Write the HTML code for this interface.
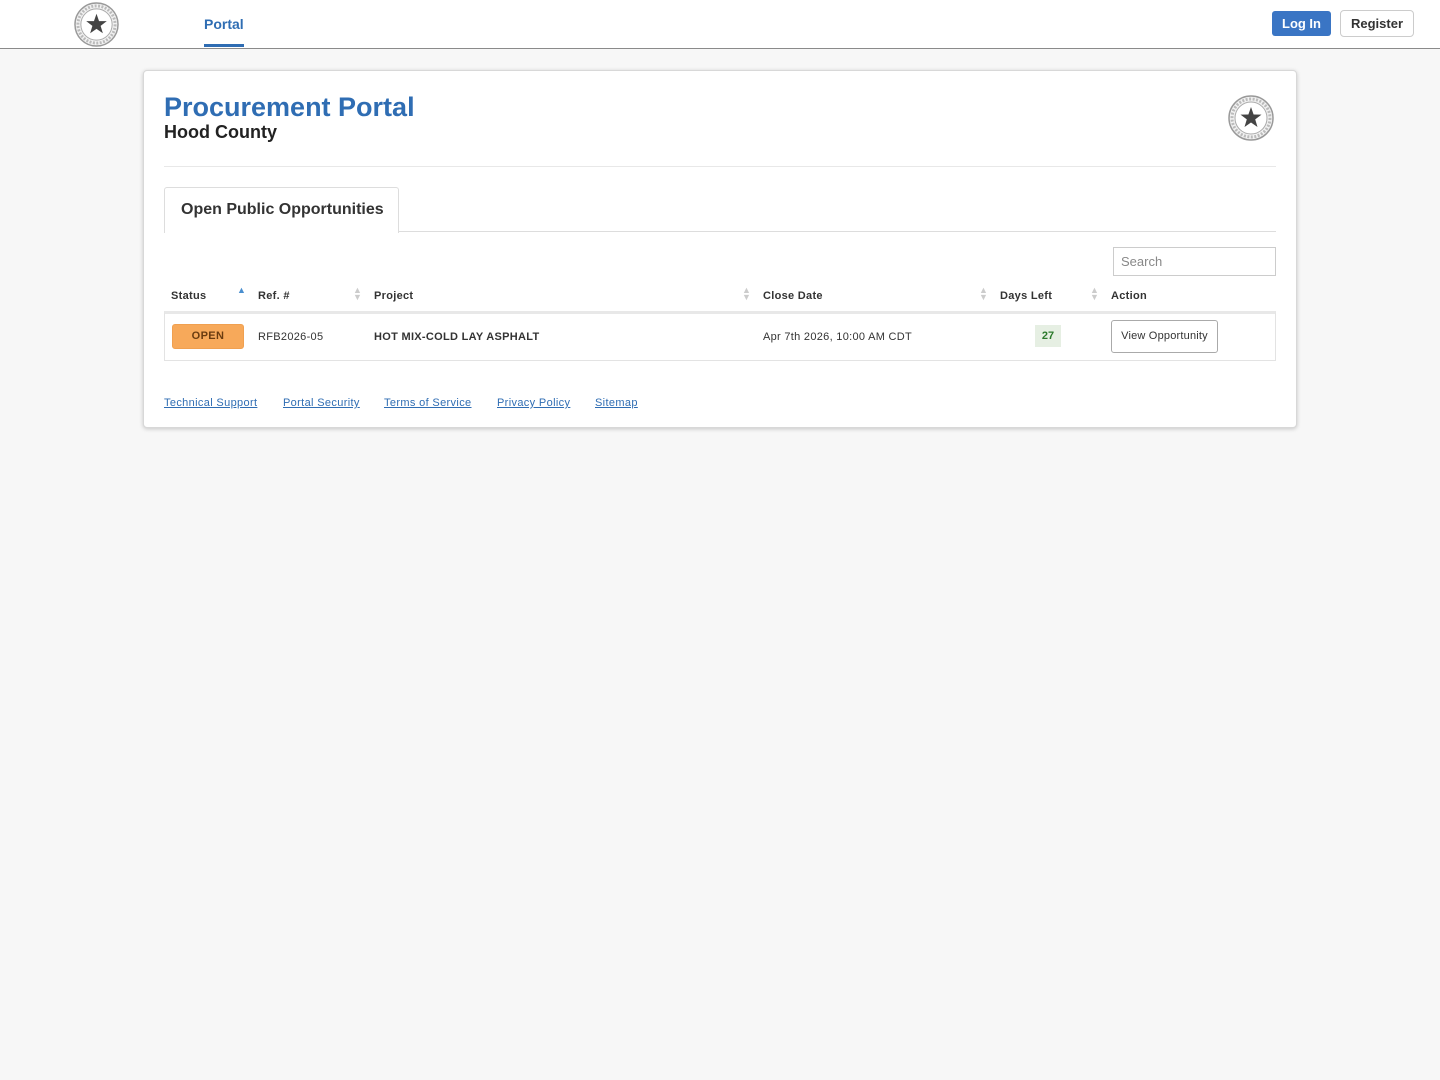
<!DOCTYPE html>
<html><head><meta charset="utf-8"><style>
*{box-sizing:border-box;margin:0;padding:0}
body{width:1440px;height:1080px;background:#f7f7f7;font-family:"Liberation Sans",Arial,sans-serif;position:relative;overflow:hidden}
.hdr{position:absolute;left:0;top:0;width:1440px;height:49px;background:#fff;border-bottom:1px solid #8a8a8a}
.seal{position:absolute}
.portal{position:absolute;left:204px;top:16px;font-size:14px;font-weight:bold;color:#2f6db3}
.portal:after{content:"";position:absolute;left:0;top:28px;width:40px;height:3px;background:#2f6db3}
.login{position:absolute;left:1272px;top:11px;width:59px;height:25px;background:#3a75c4;color:#fff;border-radius:3px;font-size:13px;font-weight:bold;text-align:center;line-height:25px}
.reg{position:absolute;left:1340px;top:10px;width:74px;height:27px;background:#fff;border:1px solid #ccc;border-radius:4px;color:#333;font-size:13px;font-weight:bold;text-align:center;line-height:25px}
.card{position:absolute;left:143px;top:70px;width:1154px;height:358px;background:#fff;border:1px solid #d8d8d8;border-radius:4px;box-shadow:0 1px 4px rgba(0,0,0,.2)}
h1{position:absolute;left:20px;top:21px;font-size:27px;color:#2f6db3;font-weight:bold}
h2{position:absolute;left:20px;top:51px;font-size:18px;color:#222;font-weight:bold}
.hr{position:absolute;left:20px;top:95px;width:1112px;height:1px;background:#e8e8e8}
.tab{position:absolute;left:20px;top:116px;width:235px;height:46px;border:1px solid #ddd;border-bottom:none;border-radius:3px 3px 0 0;background:#fff;font-size:16px;font-weight:bold;color:#333;padding:13px 0 0 16px}
.tabline{position:absolute;left:20px;top:160px;width:1112px;height:1px;background:#ddd}
.search{position:absolute;left:969px;top:176px;width:163px;height:29px;border:1px solid #ccc;font-size:13px;color:#888;padding:6px 0 0 7px}
.th{position:absolute;top:219px;font-size:11px;font-weight:bold;color:#333;letter-spacing:.3px}
.sort{position:absolute;top:216px;font-size:9px;color:#ccc;line-height:7px}
.row{position:absolute;left:20px;top:240px;width:1112px;height:50px;border:1px solid #e3e3e3;border-top:3px solid #e8e8e8}
.td{position:absolute;top:260px;font-size:11px;color:#333;letter-spacing:.3px}
.open{position:absolute;left:28px;top:253px;width:72px;height:25px;background:#f7a95a;border:1px solid #f0a050;border-radius:3px;font-size:11px;font-weight:bold;color:#6a3c10;text-align:center;line-height:23px;letter-spacing:.4px}
.days{position:absolute;left:891px;top:254px;width:26px;height:22px;background:#e6efe3;color:#2c7a2c;font-size:11px;font-weight:bold;text-align:center;line-height:23px}
.vo{position:absolute;left:967px;top:249px;width:107px;height:33px;border:1px solid #aaa;border-radius:3px;font-size:11px;color:#333;text-align:center;line-height:31px;letter-spacing:.2px}
.ft{position:absolute;top:326px;font-size:11px;color:#2f6db3;text-decoration:underline;letter-spacing:.35px}
</style></head><body>
<div class="hdr">
<svg class="seal" style="left:74px;top:2px" width="45" height="45" viewBox="0 0 46 46"><circle cx="23" cy="23" r="22" fill="#f2f2f2" stroke="#999" stroke-width="1.5"/><circle cx="23" cy="23" r="16" fill="#fff" stroke="#aaa"/><circle cx="23" cy="23" r="19" fill="none" stroke="#bbb" stroke-dasharray="2 1.5" stroke-width="3"/><polygon points="23,12 25.6,19.5 33.5,19.6 27.2,24.4 29.5,32 23,27.5 16.5,32 18.8,24.4 12.5,19.6 20.4,19.5" fill="#444"/></svg>
<div class="portal">Portal</div>
<div class="login">Log In</div>
<div class="reg">Register</div>
</div>
<div class="card">
<h1>Procurement Portal</h1>
<h2>Hood County</h2>
<svg class="seal" style="left:1084px;top:24px" width="46" height="46" viewBox="0 0 46 46"><circle cx="23" cy="23" r="22" fill="#f2f2f2" stroke="#999" stroke-width="1.5"/><circle cx="23" cy="23" r="16" fill="#fff" stroke="#aaa"/><circle cx="23" cy="23" r="19" fill="none" stroke="#bbb" stroke-dasharray="2 1.5" stroke-width="3"/><polygon points="23,12 25.6,19.5 33.5,19.6 27.2,24.4 29.5,32 23,27.5 16.5,32 18.8,24.4 12.5,19.6 20.4,19.5" fill="#444"/></svg>
<div class="hr"></div>
<div class="tabline"></div>
<div class="tab">Open Public Opportunities</div>
<div class="search">Search</div>
<div class="th" style="left:27px">Status</div><div class="sort" style="left:93px;color:#4a8fcf">▲</div>
<div class="th" style="left:114px">Ref. #</div><div class="sort" style="left:209px">▲<br>▼</div>
<div class="th" style="left:230px">Project</div><div class="sort" style="left:598px">▲<br>▼</div>
<div class="th" style="left:619px">Close Date</div><div class="sort" style="left:835px">▲<br>▼</div>
<div class="th" style="left:856px">Days Left</div><div class="sort" style="left:946px">▲<br>▼</div>
<div class="th" style="left:967px">Action</div>
<div class="row"></div>
<div class="open">OPEN</div>
<div class="td" style="left:114px">RFB2026-05</div>
<div class="td" style="left:230px;font-weight:bold">HOT MIX-COLD LAY ASPHALT</div>
<div class="td" style="left:619px">Apr 7th 2026, 10:00 AM CDT</div>
<div class="days">27</div>
<div class="vo">View Opportunity</div>
<div class="ft" style="left:20px">Technical Support</div>
<div class="ft" style="left:139px">Portal Security</div>
<div class="ft" style="left:240px">Terms of Service</div>
<div class="ft" style="left:353px">Privacy Policy</div>
<div class="ft" style="left:451px">Sitemap</div>
</div>
</body></html>
